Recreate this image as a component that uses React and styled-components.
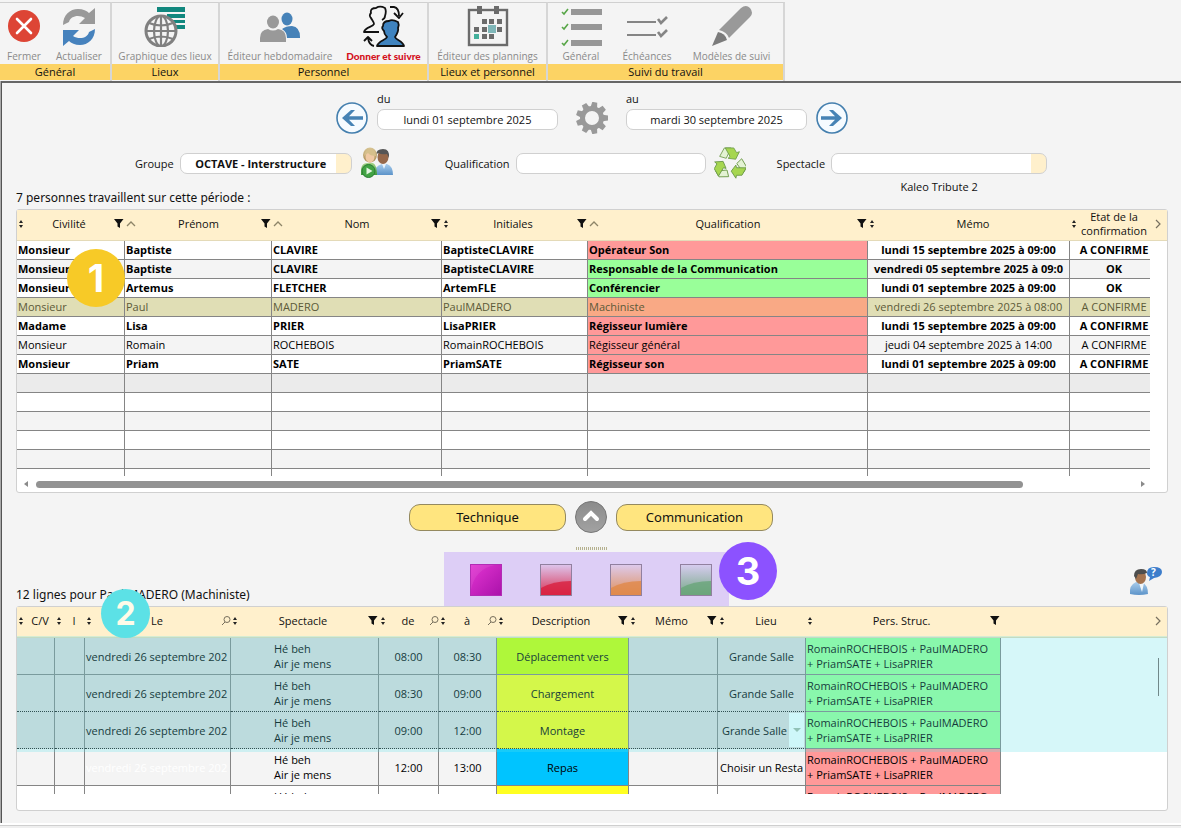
import React from "react";
import styled, { createGlobalStyle, css } from "styled-components";

const GlobalStyle = createGlobalStyle`
  * {
    box-sizing: border-box;
  }

  body {
    margin: 0;
    background: #f4f4f4;
    color: #111;
    font-family: "Open Sans", "Noto Sans", sans-serif;
    font-size: 11px;
    line-height: 16px;
  }

  button,
  input,
  select {
    font: inherit;
    color: inherit;
  }
`;

const Page = styled.div`
  display: flex;
  flex-direction: column;
  min-height: 100vh;
`;

/* ---------- toolbar ---------- */

const Toolbar = styled.nav`
  display: flex;
  padding-top: 2px;
`;

const Group = styled.section`
  display: flex;
  flex-direction: column;
  border-top: 1px solid #d0d0d0;
  border-right: 2px solid #d6d6d6;
`;

const GroupTools = styled.div`
  display: flex;
  height: 61px;
`;

const GroupName = styled.div`
  height: 16px;
  background: #fcd364;
  text-align: center;
  margin-bottom: 1px;
`;

const Tool = styled.button`
  display: flex;
  flex-direction: column;
  align-items: center;
  justify-content: space-between;
  width: ${props => props.$width}px;
  padding: 2px 0 0;
  border: 0;
  background: none;
  color: ${props => (props.$active ? "#d3101c" : "#8a8a8a")};
  font-family: ${props => (props.$active ? 'Lato, "Open Sans", sans-serif' : "inherit")};
  font-size: 10px;
  font-weight: ${props => (props.$active ? 900 : 400)};
  line-height: 16px;
  white-space: nowrap;
  cursor: pointer;
`;

/* ---------- main panel ---------- */

const Panel = styled.main`
  flex: 1;
  display: flex;
  flex-direction: column;
  margin-left: 1px;
  padding: 8px 13px 11px 14px;
  border-top: 2px solid #666;
  border-left: 1px solid #555;
  box-shadow: -1px 0 0 #aaa;
`;

const StatusBar = styled.footer`
  height: 5px;
  border-top: 2px solid #fff;
  background: #efefef;
  box-shadow: inset 0 1px 0 #cfcfcf;
`;

const PeriodRow = styled.div`
  display: flex;
  justify-content: center;
  align-items: flex-end;
  gap: 9px;
`;

const Field = styled.div`
  display: flex;
  flex-direction: column;
  gap: 2px;
  margin-bottom: 4px;
`;

const inputLook = css`
  height: 21px;
  padding: 0 8px;
  border: 1px solid #d0d0d0;
  border-radius: 7px;
  background: #fff;
  outline: 0;
`;

const TextInput = styled.input`
  ${inputLook}
  width: ${props => props.$width}px;
  text-align: center;
`;

const ListInput = styled.select`
  ${inputLook}
  width: ${props => props.$width}px;
  padding-right: 18px;
  appearance: none;
  background: linear-gradient(#fff0cc, #fff0cc) right / 15px 100% no-repeat #fff;
  font-weight: 700;
  text-align-last: center;
`;

const IconButton = styled.button`
  display: block;
  padding: 0;
  border: 0;
  background: none;
  line-height: 0;
  cursor: pointer;
`;

const GearButton = styled(IconButton)`
  margin: 0 9px;
`;

const FilterRow = styled.div`
  display: flex;
  justify-content: center;
  align-items: flex-start;
  margin-top: 13px;
  padding-right: 2px;
`;

const FilterField = styled.div`
  display: flex;
  align-items: flex-start;
  gap: 6px;
  margin: 6px ${props => (props.$last ? 0 : 8)}px 0 ${props => props.$before || 0}px;

  label {
    line-height: 21px;
  }
`;

const WithCaption = styled.div`
  display: flex;
  flex-direction: column;
  gap: 5px;
  text-align: center;
`;

const ListTitle = styled.h2`
  margin: 0;
  font-family: "Noto Sans", "Open Sans", sans-serif;
  font-size: 12px;
  font-weight: 400;
  line-height: 16px;
`;

const PeopleTitle = styled(ListTitle)`
  margin: -5px 0 3px;
`;

/* ---------- grids ---------- */

const GridFrame = styled.div`
  position: relative;
  border: 1px solid #d0d0d0;
  border-radius: 3px;
  background: #fff;
`;

const Viewport = styled.div`
  height: ${props => props.$height}px;
  overflow: hidden;
`;

const Grid = styled.table`
  width: 100%;
  table-layout: fixed;
  border-collapse: separate;
  border-spacing: 0;
`;

const Th = styled.th`
  height: 31px;
  padding: 0 0 2px;
  border-bottom: 1px solid #e4dab8;
  background: #fff0cc;
  font-weight: 400;
`;

const HeadCell = styled.div`
  display: flex;
  align-items: center;
  line-height: 14px;

  span {
    flex: 1;
    overflow: hidden;
    text-align: center;
  }

  svg {
    flex: none;
  }
`;

const MoreCell = styled.div`
  display: flex;
  justify-content: flex-end;
  padding-right: 5px;
`;

const Td = styled.td`
  height: ${props => props.$height || 19}px;
  padding: 0 1px;
  overflow: hidden;
  border-right: 1px solid #858585;
  border-bottom: 1px ${props => (props.$dotted ? "dotted #222" : "solid #858585")};
  background: ${props => props.$bg || "transparent"};
  color: ${props => props.$color || "inherit"};
  line-height: ${props => (props.$height ? 15 : 18)}px;
  text-align: ${props => props.$align || "left"};
  white-space: nowrap;
`;

const LastTd = styled(Td)`
  padding-left: 9px;
  border-right: 0;
`;

const Spare = styled.td`
  padding: 0;
  background: #fff;
`;

const Row = styled.tr`
  background: ${props => props.$bg};
  color: ${props => (props.$selected ? "#5c5a38" : "#000")};
  font-weight: ${props => (props.$bold ? 700 : 400)};
`;

const TitleLines = styled.div`
  padding-left: 42px;
`;

const PlaceSelect = styled.select`
  display: block;
  width: 100%;
  height: 34px;
  padding: 0 16px 0 3px;
  border: 0;
  appearance: none;
  background: linear-gradient(#f4ffff, #f4ffff) right / 15px 100% no-repeat;
`;

const PlaceCell = styled.div`
  display: grid;
  align-items: center;
  justify-items: end;

  > * {
    grid-area: 1 / 1;
  }

  svg {
    margin-right: 3px;
    pointer-events: none;
  }
`;

const HScroll = styled.div`
  display: flex;
  align-items: center;
  gap: 6px;
  height: 16px;
  padding: 0 20px 0 5px;
`;

const HTrack = styled.div`
  flex: 1;
`;

const HThumb = styled.div`
  width: 90%;
  height: 7px;
  border-radius: 4px;
  background: #929292;
`;

const VThumb = styled.div`
  position: absolute;
  top: 51px;
  right: 8px;
  width: 1px;
  height: 38px;
  background: #71888a;
`;

const Highlight = styled.div`
  position: absolute;
  top: 29px;
  left: 0;
  right: 0;
  height: 116px;
  background: rgba(92, 225, 230, 0.25);
  pointer-events: none;
`;

const Badge = styled.div`
  position: absolute;
  top: ${props => props.$top}px;
  left: ${props => props.$left}px;
  width: ${props => props.$size}px;
  height: ${props => props.$size}px;
  border-radius: 50%;
  background: ${props => props.$bg};
  color: ${props => props.$color || "#fff"};
  font-family: Inter, "Open Sans", sans-serif;
  font-size: ${props => (props.$size > 50 ? 38 : 32)}px;
  font-weight: 700;
  line-height: ${props => props.$size}px;
  text-align: center;
`;

/* ---------- middle area ---------- */

const SwitchRow = styled.div`
  display: flex;
  justify-content: center;
  align-items: center;
  gap: 9px;
  margin-top: 8px;
  padding-right: 2px;
`;

const PillButton = styled.button`
  width: 157px;
  height: 27px;
  padding: 0;
  border: 1px solid #94895f;
  border-radius: 11px;
  background: #ffe57f;
  font-family: "Noto Sans", "Open Sans", sans-serif;
  font-size: 13px;
  cursor: pointer;
`;

const Splitter = styled.div`
  align-self: center;
  width: 32px;
  height: 3px;
  margin: 14px 0 2px;
  background: repeating-linear-gradient(90deg, #b5b18f 0 1px, #f4f4f4 1px 2px);
`;

const LegendRow = styled.div`
  display: grid;
  grid-template-columns: 1fr auto 1fr;
  align-items: end;
`;

const LinesTitle = styled(ListTitle)`
  margin-bottom: 3px;
`;

const Legend = styled.div`
  position: relative;
  display: flex;
  gap: 38px;
  margin-right: 11px;
  padding: 12px 17px 10px 26px;
  background: #ddcef6;
`;

const HelpButton = styled(IconButton)`
  justify-self: end;
  margin: 0 6px 9px 0;
`;

/* ---------- icons ---------- */

const CloseIcon = () => (
  <svg width="40" height="40" viewBox="0 0 40 40">
    <circle cx="20" cy="21" r="16" fill="#dd4535" />
    <path d="M13 14l14 14M27 14L13 28" stroke="#fff" strokeWidth="2.6" strokeLinecap="round" />
  </svg>
);

const turn = "M4 20C4 10 11 4 19 4C24 4 28 6 30 8L36 3V19H20L26 13C20 9 11 11 10 17Z";

const RefreshIcon = () => (
  <svg width="40" height="42" viewBox="0 0 40 42">
    <path d={turn} fill="#999" />
    <path d={turn} fill="#4682bd" transform="rotate(180 20 22)" />
  </svg>
);

const GlobeIcon = () => (
  <svg width="42" height="42" viewBox="0 0 42 42">
    <g fill="#11877e">
      <path d="M13 2h28v5H13zM23 9h18v4H23zM29 15h12v3H29zM31 20h10v4H31z" />
    </g>
    <g fill="#f4f4f4" stroke="#808080" strokeWidth="2.2">
      <circle cx="17" cy="26" r="15" strokeWidth="3" />
      <ellipse cx="17" cy="26" rx="7" ry="15" />
      <path d="M17 11v30M2 26h30M5 18q12 5 24 0M5 34q12-5 24 0" fill="none" />
    </g>
  </svg>
);

const TeamIcon = () => (
  <svg width="42" height="42" viewBox="0 0 42 42">
    <g fill="#4682b8">
      <ellipse cx="28" cy="14" rx="5.5" ry="6.5" />
      <path d="M23 24q4-3 10-3 8 1 8 11v1H28q0-6-5-9z" />
    </g>
    <g fill="#999">
      <ellipse cx="14" cy="17" rx="6" ry="6.5" />
      <path d="M1 37V33q0-8 8-9 5 3 10 0 8 1 8 9v4z" />
    </g>
  </svg>
);

const HandoverIcon = () => (
  <svg width="44" height="42" viewBox="0 0 44 42" stroke="#111" strokeWidth="1.8" strokeLinejoin="round">
    <path
      d="M17 27H2C3 22 11 22 12 19C12 17 10 15 9 13C7 11 8 9 9 8C8 4 11 3 14 3C17 1 21 2 23 3C24 5 24 8 23 11C23 13 22 14 20 15"
      fill="none"
    />
    <path
      d="M15 41C16 36 24 35 25 32C23 30 22 28 22 26C20 24 20 22 21 21C21 17 24 16 27 16C30 14 34 16 36 17C37 19 37 21 36 23C37 26 35 29 33 32C34 35 41 36 42 41Z"
      fill="#3f83bf"
    />
    <path d="M28 2h4q5 1 5 9M32 8l5 5 4-5M12 41q-5-1-6-8M2 36l4-4 4 4" fill="none" />
  </svg>
);

const CalendarIcon = () => (
  <svg width="42" height="42" viewBox="0 0 42 42">
    <rect x="2" y="5" width="38" height="35" fill="none" stroke="#6b6b6b" strokeWidth="2.4" />
    <path d="M10 1h5v8h-5zM27 1h5v8h-5z" fill="#6b6b6b" />
    <path
      d="M15 14h5v5h-5zM22 14h5v5h-5zM30 14h5v5h-5zM7 22h5v5H7zM15 22h5v5h-5zM30 22h5v5h-5zM15 29h5v5h-5zM22 29h5v5h-5z"
      fill="#6b6b6b"
    />
    <path d="M21 20h8v8h-8z" fill="#7fb7b9" />
    <path d="M7 29h5v5H7z" fill="#43b09b" />
  </svg>
);

const ChecklistIcon = () => (
  <svg width="42" height="42" viewBox="0 0 42 42">
    <path d="M11 4h31v6H11zM11 19h31v6H11zM11 35h31v6H11z" fill="#979797" />
    <path
      d="M2 7l2 2 4-5M2 22l2 2 4-5M2 38l2 2 4-5"
      fill="none"
      stroke="#58a648"
      strokeWidth="1.6"
    />
  </svg>
);

const DeadlinesIcon = () => (
  <svg width="42" height="42" viewBox="0 0 42 42" fill="none" stroke="#858585">
    <path d="M1 17h29M1 30h29" strokeWidth="2.2" />
    <path d="M32 14l3 4 6-6M32 27l3 4 6-6" strokeWidth="2.6" />
  </svg>
);

const PencilIcon = () => (
  <svg width="42" height="42" viewBox="0 0 42 42">
    <path d="M8 25L30 3q5-4 9 0 4 5 0 9L18 33q-2-6-10-8z" fill="#999" />
    <path d="M7 27q7 1 9 8L1 41z" fill="#7b7b7b" />
  </svg>
);

const ArrowIcon = ({ flip }) => (
  <svg width="32" height="32" viewBox="0 0 32 32">
    <circle cx="16" cy="16" r="15" fill="#f6fbff" stroke="#447fae" strokeWidth="1.6" />
    <path
      d="M6 16l9-8h4l-6 6.200h14v3.600H13l6 6.200h-4z"
      fill="#4683b5"
      transform={flip ? "matrix(-1 0 0 1 32 0)" : undefined}
    />
  </svg>
);

const GearIcon = () => (
  <svg width="32" height="32" viewBox="0 0 32 32">
    <g fill="#999" transform="rotate(10 16 16)">
      {[0, 40, 80, 120, 160, 200, 240, 280, 320].map(a => (
        <path key={a} d="M13.500 0h5l1 7h-7z" transform={`rotate(${a} 16 16)`} />
      ))}
    </g>
    <circle cx="16" cy="16" r="9.5" fill="none" stroke="#999" strokeWidth="5" />
  </svg>
);

const GroupIcon = () => (
  <svg width="34" height="32" viewBox="0 0 34 32">
    <defs>
      <linearGradient id="gBlue" x2="0" y2="1">
        <stop stopColor="#a9cdec" />
        <stop offset="1" stopColor="#5c93c9" />
      </linearGradient>
      <linearGradient id="gGreen" x2="0" y2="1">
        <stop stopColor="#a8d58a" />
        <stop offset="1" stopColor="#3d9a3a" />
      </linearGradient>
      <linearGradient id="gHair" x2="0" y2="1">
        <stop stopColor="#d8c594" />
        <stop offset="1" stopColor="#ab8b55" />
      </linearGradient>
    </defs>
    <path d="M14 28q0-9 8-11h5q6 2 6 11z" fill="url(#gBlue)" />
    <path d="M22 17l2 5 2-5z" fill="#eaf3fb" />
    <ellipse cx="23" cy="10" rx="5.5" ry="7" fill="#96684a" />
    <path d="M16 8q0-6 7-6 7 0 6 9l-2-4q-5 1-9-1z" fill="#555" />
    <path d="M1 28V22q1-6 6-6h6q4 2 4 12z" fill="url(#gGreen)" />
    <ellipse cx="10" cy="8" rx="7" ry="7.5" fill="url(#gHair)" />
    <ellipse cx="10" cy="10" rx="4.5" ry="5.5" fill="#f0c9a4" />
    <path d="M4 9q1-7 7-7 5 1 5 7-6 0-8-3z" fill="#d6c08c" />
    <circle cx="8.5" cy="24" r="6.5" fill="#42a344" stroke="#2a7c34" />
    <path d="M6.5 20.500v7l6-3.500z" fill="#e4f5e2" />
  </svg>
);

const RecycleIcon = () => (
  <svg width="32" height="32" viewBox="0 0 34 34">
    {[0, 120, 240].map(a => (
      <g key={a} transform={`rotate(${a} 17 18)`} stroke="#6d9a4a" strokeWidth="0.9">
        <path d="M6 10l5-9h7l-5 11z" fill="#e3f2d3" />
        <path d="M12 1h9l3 5 3-1-4 8-8-1 2-2z" fill="#a6d650" />
      </g>
    ))}
  </svg>
);

const UpIcon = () => (
  <svg width="32" height="32" viewBox="0 0 32 32">
    <defs>
      <linearGradient id="gUp" x2="0" y2="1">
        <stop stopColor="#8b8b8b" />
        <stop offset="1" stopColor="#a2a2a2" />
      </linearGradient>
    </defs>
    <circle cx="16" cy="16" r="15.5" fill="url(#gUp)" stroke="#777" />
    <path d="M10 18l6-6 6 6" fill="none" stroke="#fff" strokeWidth="4" strokeLinecap="round" />
  </svg>
);

const HelpPersonIcon = () => (
  <svg width="33" height="32" viewBox="0 0 33 32">
    <path d="M1 29q-1-9 6-12h6q6 3 6 12-9 2-18 0z" fill="url(#gBlue)" />
    <path d="M10 18l3 9 2-9z" fill="#f1f7fc" />
    <ellipse cx="11.5" cy="12" rx="5.5" ry="7" fill="#a4734f" />
    <path d="M5 11q0-7 7-7 6 0 6 4-5 2-9 1l-2 5z" fill="#4d4d4d" />
    <path d="M18 8q0-6 7-6 8 0 8 5t-8 6l-5 3 1-4q-3-1-3-4z" fill="#3c7dcb" />
    <text x="22" y="11" fontSize="10" fontWeight="700" fill="#fff">?</text>
  </svg>
);

const Swatch = ({ name, color }) => (
  <svg width="32" height="32" viewBox="0 0 32 32">
    <defs>
      <linearGradient id={name} x2="0" y2="1">
        <stop stopColor={color} stopOpacity="0.05" />
        <stop offset="1" stopColor={color} stopOpacity="0.9" />
      </linearGradient>
    </defs>
    <rect x="0.5" y="0.5" width="31" height="31" fill={`url(#${name})`} stroke="#91809f" />
    <path d="M1 24q12-7 30-7v14H1z" fill={color} fillOpacity="0.8" />
  </svg>
);

const PinkSwatch = () => (
  <svg width="32" height="32" viewBox="0 0 32 32">
    <defs>
      <linearGradient id="gPink" x2="1" y2="1">
        <stop stopColor="#e335d2" />
        <stop offset="1" stopColor="#aa12aa" />
      </linearGradient>
    </defs>
    <rect x="0.5" y="0.5" width="31" height="31" fill="url(#gPink)" stroke="#b22cb5" />
    <path d="M1 31V26Q5 5 25 1H1z" fill="#fff" fillOpacity="0.08" />
  </svg>
);

const SortMark = () => (
  <svg width="8" height="10" viewBox="0 0 8 10">
    <path d="M2 4l2-3 2 3zM2 6l2 3 2-3z" fill="#222" />
  </svg>
);

const UpMark = () => (
  <svg width="12" height="10" viewBox="0 0 12 10">
    <path d="M2 7l4-4 4 4" fill="none" stroke="#8d8468" strokeWidth="1.3" />
  </svg>
);

const FilterMark = () => (
  <svg width="12" height="10" viewBox="0 0 12 10">
    <path d="M1 0h9.500L7 4.500V9L4.500 7.500v-3z" fill="#111" />
  </svg>
);

const SearchMark = () => (
  <svg width="10" height="10" viewBox="0 0 10 10" fill="none" stroke="#776f5c">
    <circle cx="6" cy="3.5" r="3" />
    <path d="M4 6L1 9" />
  </svg>
);

const Chevron = () => (
  <svg width="8" height="12" viewBox="0 0 8 12">
    <path d="M2 2l4 4-4 4" fill="none" stroke="#777060" strokeWidth="1.2" />
  </svg>
);

const Triangle = ({ d, color }) => (
  <svg width="8" height="8" viewBox="0 0 8 8">
    <path d={d} fill={color} />
  </svg>
);

/* ---------- data ---------- */

const toolGroups = [
  {
    name: "Général",
    tools: [
      { label: "Fermer", width: 48, Icon: CloseIcon },
      { label: "Actualiser", width: 62, Icon: RefreshIcon }
    ]
  },
  {
    name: "Lieux",
    tools: [{ label: "Graphique des lieux", width: 106, Icon: GlobeIcon }]
  },
  {
    name: "Personnel",
    tools: [
      { label: "Éditeur hebdomadaire", width: 120, Icon: TeamIcon },
      { label: "Donner et suivre", width: 87, Icon: HandoverIcon, active: true }
    ]
  },
  {
    name: "Lieux et personnel",
    tools: [{ label: "Éditeur des plannings", width: 117, Icon: CalendarIcon }]
  },
  {
    name: "Suivi du travail",
    tools: [
      { label: "Général", width: 66, Icon: ChecklistIcon },
      { label: "Échéances", width: 66, Icon: DeadlinesIcon },
      { label: "Modèles de suivi", width: 103, Icon: PencilIcon }
    ]
  }
];

const RED = "#ff9999";
const GREEN = "#99ff99";

const peopleColumns = [
  { label: "Civilité", width: 108, lead: "sort", trail: "filter" },
  { label: "Prénom", width: 147, lead: "up", trail: "filter" },
  { label: "Nom", width: 170, lead: "up", trail: "filter" },
  { label: "Initiales", width: 146, lead: "sort", trail: "filter" },
  { label: "Qualification", lead: "up", trail: "filter" },
  { label: "Mémo", width: 202, lead: "sort" },
  { label: "Etat de la confirmation", width: 80, lead: "sort" },
  { more: true, width: 17 }
];

const people = [
  ["Monsieur", "Baptiste", "CLAVIRE", "BaptisteCLAVIRE", "Opérateur Son", "lundi 15 septembre 2025 à 09:00", "A CONFIRME", RED, true],
  ["Monsieur", "Baptiste", "CLAVIRE", "BaptisteCLAVIRE", "Responsable de la Communication", "vendredi 05 septembre 2025 à 09:0", "OK", GREEN, true],
  ["Monsieur", "Artemus", "FLETCHER", "ArtemFLE", "Conférencier", "lundi 01 septembre 2025 à 09:00", "OK", GREEN, true],
  ["Monsieur", "Paul", "MADERO", "PaulMADERO", "Machiniste", "vendredi 26 septembre 2025 à 08:00", "A CONFIRME", "#f9a985", false],
  ["Madame", "Lisa", "PRIER", "LisaPRIER", "Régisseur lumière", "lundi 15 septembre 2025 à 09:00", "A CONFIRME", RED, true],
  ["Monsieur", "Romain", "ROCHEBOIS", "RomainROCHEBOIS", "Régisseur général", "jeudi 04 septembre 2025 à 14:00", "A CONFIRME", RED, false],
  ["Monsieur", "Priam", "SATE", "PriamSATE", "Régisseur son", "lundi 01 septembre 2025 à 09:00", "A CONFIRME", RED, true]
];

const emptyRows = ["#ebebeb", "#fff", "#f4f4f4", "#fff", "#f4f4f4", "#fff"];

const lineColumns = [
  { label: "C/V", width: 38, lead: "sort" },
  { label: "I", width: 30, lead: "sort" },
  { label: "Le", width: 146, lead: "sort", trail: "search" },
  { label: "Spectacle", width: 148, lead: "sort", trail: "filter" },
  { label: "de", width: 60, lead: "sort", trail: "search" },
  { label: "à", width: 58, lead: "sort", trail: "search" },
  { label: "Description", width: 132, lead: "sort", trail: "filter" },
  { label: "Mémo", width: 89, lead: "sort", trail: "filter" },
  { label: "Lieu", width: 88, lead: "sort" },
  { label: "Pers. Struc.", width: 195, lead: "sort", trail: "filter" },
  { more: true }
];

const lines = [
  { from: "08:00", to: "08:30", text: "Déplacement vers", place: "Grande Salle", bg: "#dcdada", color: "#cbff00", staff: GREEN },
  { from: "08:30", to: "09:00", text: "Chargement", place: "Grande Salle", bg: "#dcdada", color: "#fcff16", staff: GREEN, dotted: true },
  { from: "09:00", to: "12:00", text: "Montage", place: "Grande Salle", bg: "#dcdada", color: "#fcff16", staff: GREEN, dotted: true, editing: true },
  { from: "12:00", to: "13:00", text: "Repas", place: "Choisir un Resta", bg: "#f4f4f4", color: "#00c4ff", staff: RED, dateColor: "#fff" },
  { from: "", to: "", text: "", place: "", bg: "#fff", color: "#ffff21", staff: RED, dateColor: "#fff" }
];

const marks = {
  sort: SortMark,
  up: UpMark,
  filter: FilterMark,
  search: SearchMark
};

const GridHead = ({ columns }) => (
  <>
    <colgroup>
      {columns.map((column, i) => (
        <col key={i} width={column.width} />
      ))}
    </colgroup>
    <thead>
      <tr>
        {columns.map((column, i) => {
          const Lead = marks[column.lead];
          const Trail = marks[column.trail];
          return (
            <Th key={i}>
              {column.more ? (
                <MoreCell>
                  <Chevron />
                </MoreCell>
              ) : (
                <HeadCell>
                  {Lead && <Lead />}
                  <span>{column.label}</span>
                  {Trail && <Trail />}
                </HeadCell>
              )}
            </Th>
          );
        })}
      </tr>
    </thead>
  </>
);

const PeopleGrid = () => (
  <GridFrame>
    <Viewport $height={266}>
      <Grid>
        <GridHead columns={peopleColumns} />
        <tbody>
          {people.map((person, i) => {
            const [title, first, last, initials, job, memo, state, color, bold] = person;
            const selected = i === 3;
            const bg = selected ? "#e0deb5" : i % 2 ? "#f4f4f4" : "#fff";
            return (
              <Row key={i} $bg={bg} $bold={bold} $selected={selected}>
                <Td>{title}</Td>
                <Td>{first}</Td>
                <Td>{last}</Td>
                <Td>{initials}</Td>
                <Td $bg={color}>{job}</Td>
                <Td $align="center">{memo}</Td>
                <LastTd $align="center">{state}</LastTd>
                <Spare />
              </Row>
            );
          })}
          {emptyRows.map((bg, i) => (
            <Row key={i} $bg={bg}>
              <Td />
              <Td />
              <Td />
              <Td />
              <Td />
              <Td />
              <LastTd />
              <Spare />
            </Row>
          ))}
        </tbody>
      </Grid>
    </Viewport>
    <HScroll>
      <Triangle d="M6 1v6L2 4z" color="#8a8a8a" />
      <HTrack>
        <HThumb />
      </HTrack>
      <Triangle d="M2 1v6l4-3z" color="#8a8a8a" />
    </HScroll>
    <Badge $top={39} $left={50} $size={58} $bg="#f7ca27">
      1
    </Badge>
  </GridFrame>
);

const LinesGrid = () => (
  <GridFrame>
    <Viewport $height={187}>
      <Grid>
        <GridHead columns={lineColumns} />
        <tbody>
          {lines.map((line, i) => {
            const cell = { $height: 37, $dotted: line.dotted };
            return (
              <Row key={i} $bg={line.bg}>
                <Td {...cell} />
                <Td {...cell} />
                <Td {...cell} $color={line.dateColor}>
                  vendredi 26 septembre 202
                </Td>
                <Td {...cell}>
                  <TitleLines>
                    Hé beh
                    <br />
                    Air je mens
                  </TitleLines>
                </Td>
                <Td {...cell} $align="center">{line.from}</Td>
                <Td {...cell} $align="center">{line.to}</Td>
                <Td {...cell} $align="center" $bg={line.color}>{line.text}</Td>
                <Td {...cell} />
                <Td {...cell} $align="center">
                  {line.editing ? (
                    <PlaceCell>
                      <PlaceSelect aria-label="Lieu" defaultValue={line.place}>
                        <option>{line.place}</option>
                      </PlaceSelect>
                      <Triangle d="M0 2h8L4 6z" color="#a3b8a6" />
                    </PlaceCell>
                  ) : (
                    line.place
                  )}
                </Td>
                <Td $height={37} $bg={line.staff}>
                  RomainROCHEBOIS + PaulMADERO
                  <br />+ PriamSATE + LisaPRIER
                </Td>
                <Spare />
              </Row>
            );
          })}
        </tbody>
      </Grid>
    </Viewport>
    <HScroll />
    <Highlight />
    <VThumb />
    <Badge $top={-18} $left={84} $size={49} $bg="#5ce1e6" $color="#fffbe8">
      2
    </Badge>
  </GridFrame>
);

const App = () => (
  <Page>
    <GlobalStyle />
    <Toolbar>
      {toolGroups.map(group => (
        <Group key={group.name}>
          <GroupTools>
            {group.tools.map(({ label, width, Icon, active }) => (
              <Tool key={label} type="button" $width={width} $active={active}>
                <Icon />
                {label}
              </Tool>
            ))}
          </GroupTools>
          <GroupName>{group.name}</GroupName>
        </Group>
      ))}
    </Toolbar>
    <Panel>
      <PeriodRow>
        <IconButton type="button" aria-label="Période précédente">
          <ArrowIcon />
        </IconButton>
        <Field>
          <label htmlFor="from">du</label>
          <TextInput id="from" $width={181} defaultValue="lundi 01 septembre 2025" />
        </Field>
        <GearButton type="button" aria-label="Paramètres">
          <GearIcon />
        </GearButton>
        <Field>
          <label htmlFor="to">au</label>
          <TextInput id="to" $width={181} defaultValue="mardi 30 septembre 2025" />
        </Field>
        <IconButton type="button" aria-label="Période suivante">
          <ArrowIcon flip />
        </IconButton>
      </PeriodRow>
      <FilterRow>
        <FilterField>
          <label htmlFor="group">Groupe</label>
          <ListInput id="group" $width={172}>
            <option>OCTAVE - Interstructure</option>
          </ListInput>
        </FilterField>
        <IconButton type="button" aria-label="Groupes">
          <GroupIcon />
        </IconButton>
        <FilterField $before={51}>
          <label htmlFor="job">Qualification</label>
          <TextInput id="job" $width={190} />
        </FilterField>
        <IconButton type="button" aria-label="Réinitialiser">
          <RecycleIcon />
        </IconButton>
        <FilterField $before={31} $last>
          <label htmlFor="show">Spectacle</label>
          <WithCaption>
            <ListInput id="show" $width={216}>
              <option></option>
            </ListInput>
            <span>Kaleo Tribute 2</span>
          </WithCaption>
        </FilterField>
      </FilterRow>
      <PeopleTitle>7 personnes travaillent sur cette période :</PeopleTitle>
      <PeopleGrid />
      <SwitchRow>
        <PillButton type="button">Technique</PillButton>
        <IconButton type="button" aria-label="Replier">
          <UpIcon />
        </IconButton>
        <PillButton type="button">Communication</PillButton>
      </SwitchRow>
      <Splitter />
      <LegendRow>
        <LinesTitle>12 lignes pour Paul MADERO (Machiniste)</LinesTitle>
        <Legend>
          <IconButton type="button" aria-label="Rose">
            <PinkSwatch />
          </IconButton>
          <IconButton type="button" aria-label="Rouge">
            <Swatch name="sRed" color="#d81f3f" />
          </IconButton>
          <IconButton type="button" aria-label="Orange">
            <Swatch name="sOrange" color="#e08848" />
          </IconButton>
          <IconButton type="button" aria-label="Vert">
            <Swatch name="sGreen" color="#69a579" />
          </IconButton>
          <Badge $top={-10} $left={275} $size={58} $bg="#8c52ff">
            3
          </Badge>
        </Legend>
        <HelpButton type="button" aria-label="Aide">
          <HelpPersonIcon />
        </HelpButton>
      </LegendRow>
      <LinesGrid />
    </Panel>
    <StatusBar />
  </Page>
);

export default App;
